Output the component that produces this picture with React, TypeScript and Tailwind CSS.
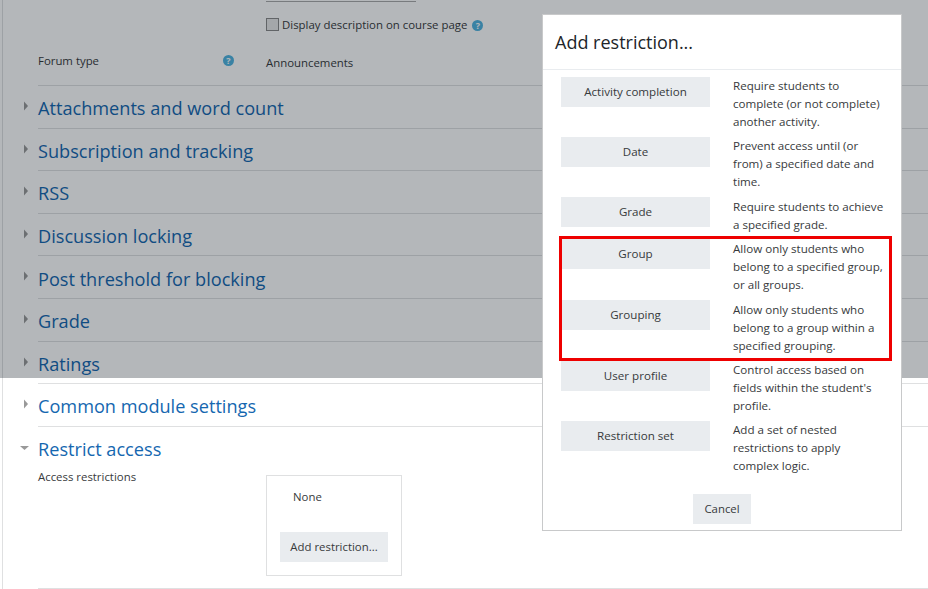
const sections = [
  'Attachments and word count',
  'Subscription and tracking',
  'RSS',
  'Discussion locking',
  'Post threshold for blocking',
  'Grade',
  'Ratings',
  'Common module settings',
];

const restrictions = [
  { label: 'Activity completion', text: 'Require students to complete (or not complete) another activity.', row: 'h-[60px]', btn: 'pb-[1px]', desc: '' },
  { label: 'Date', text: 'Prevent access until (or from) a specified date and time.', row: 'h-[60px]', btn: 'pb-[1px]', desc: '' },
  { label: 'Grade', text: 'Require students to achieve a specified grade.', row: 'h-[42px]', btn: '', desc: 'mt-[1px]' },
  { label: 'Group', text: 'Allow only students who belong to a specified group, or all groups.', row: 'h-[61px]', btn: '', desc: 'mt-[1px]' },
  { label: 'Grouping', text: 'Allow only students who belong to a group within a specified grouping.', row: 'h-[61px]', btn: 'pb-[1px]', desc: 'mt-[1px]' },
  { label: 'User profile', text: "Control access based on fields within the student's profile.", row: 'h-[60px]', btn: 'pb-[1px]', desc: '' },
  { label: 'Restriction set', text: 'Add a set of nested restrictions to apply complex logic.', row: 'h-[73px]', btn: 'pb-[1px]', desc: '' },
];

function HelpIcon() {
  return (
    <span className="flex h-[11px] w-[11px] items-center justify-center rounded-full bg-[#4fb3e0] text-[9px] font-bold leading-none text-white">
      ?
    </span>
  );
}

function Caret({ open }: { open?: boolean }) {
  return (
    <svg width="10" height="10" viewBox="0 0 10 10" className="shrink-0">
      {open ? <path d="M0 3 H9 L4.5 7 Z" fill="#999" /> : <path d="M3 0.5 L7 5 L3 9.5 Z" fill="#999" />}
    </svg>
  );
}

export default function App() {
  return (
    <div className="relative h-[589px] w-[928px] overflow-hidden bg-white font-['Open_Sans',sans-serif] text-[11.4px] text-[#373a3c]">
      <div className="ml-[2px] h-full border-l border-[#dfe0e1] pl-[35px]">
        {/* General settings tail */}
        <div className="ml-[228px] h-[2px] w-[150px] border-b border-[#aaa]" />
        <div className="ml-[228px] flex h-[44px] items-center gap-[3px] pt-[1px]">
          <span className="h-[13px] w-[13px] border border-[#888] bg-[#e8e8e8]" />
          <span>Display description on course page</span>
          <span className="ml-[2px] mt-[2px]"><HelpIcon /></span>
        </div>
        <div className="flex h-[40px] items-start border-b border-[#dfe0e1] pt-[6px]">
          <span className="w-[185px]">Forum type</span>
          <span className="mt-[3px] w-[43px]"><HelpIcon /></span>
          <span className="mt-[2px]">Announcements</span>
        </div>

        {sections.map((name) => (
          <div key={name} className="relative flex h-[42.6px] items-center border-b border-[#dfe0e1] pt-[3px]">
            <span className="absolute left-[-17px] top-[15px]"><Caret /></span>
            <span className="text-[18.15px] leading-none text-[#1567b0]">{name}</span>
          </div>
        ))}

        {/* Restrict access */}
        <div className="relative flex h-[37px] items-center pt-[8px]">
          <span className="absolute left-[-18px] top-[16px]"><Caret open /></span>
          <span className="text-[18.15px] leading-none text-[#1567b0]">Restrict access</span>
        </div>
        <div className="flex h-[125px] items-start border-b border-[#dfe0e1]">
          <span className="w-[228px] pt-[4px]">Access restrictions</span>
          <div className="mt-[11.2px] flex h-[101px] w-[136px] flex-col border border-[#dfe0e1] pl-[13px]">
            <span className="ml-[13px] mt-[12px]">None</span>
            <button className="mt-[27px] h-[30px] w-[108px] bg-[#e9ecef] text-center text-[11.4px] text-[#373a3c]">
              Add restriction...
            </button>
          </div>
        </div>
      </div>

      {/* Dimmed backdrop */}
      <div className="absolute left-0 top-0 h-[378px] w-full bg-[#050f19]/30" />

      {/* Modal */}
      <div className="absolute left-[542px] top-[14px] h-[517px] w-[360px] border border-[#c8c9ca] bg-white">
        <div className="flex h-[55px] items-center border-b border-[#e9ecef] pl-[12px] pt-[1px] text-[18px] text-[#212529]">
          Add restriction...
        </div>
        <div className="pl-[18px] pt-[7px]">
          {restrictions.map((r) => (
            <div key={r.label} className={`flex items-start ${r.row}`}>
              <button className={`h-[30px] w-[149px] shrink-0 bg-[#e9ecef] text-center text-[11.6px] text-[#373a3c] ${r.btn}`}>
                {r.label}
              </button>
              <p className={`ml-[23px] w-[152px] text-[11.6px] leading-[18px] ${r.desc}`}>{r.text}</p>
            </div>
          ))}
        </div>
        <div className="flex justify-center px-[1px]">
          <button className="h-[30px] w-[58px] bg-[#e9ecef] pb-[1px] text-[11.4px] text-[#373a3c]">Cancel</button>
        </div>
      </div>

      {/* Red annotation */}
      <div className="absolute left-[559px] top-[236px] h-[125px] w-[333px] border-[3px] border-[#ee0000]" />
    </div>
  );
}
